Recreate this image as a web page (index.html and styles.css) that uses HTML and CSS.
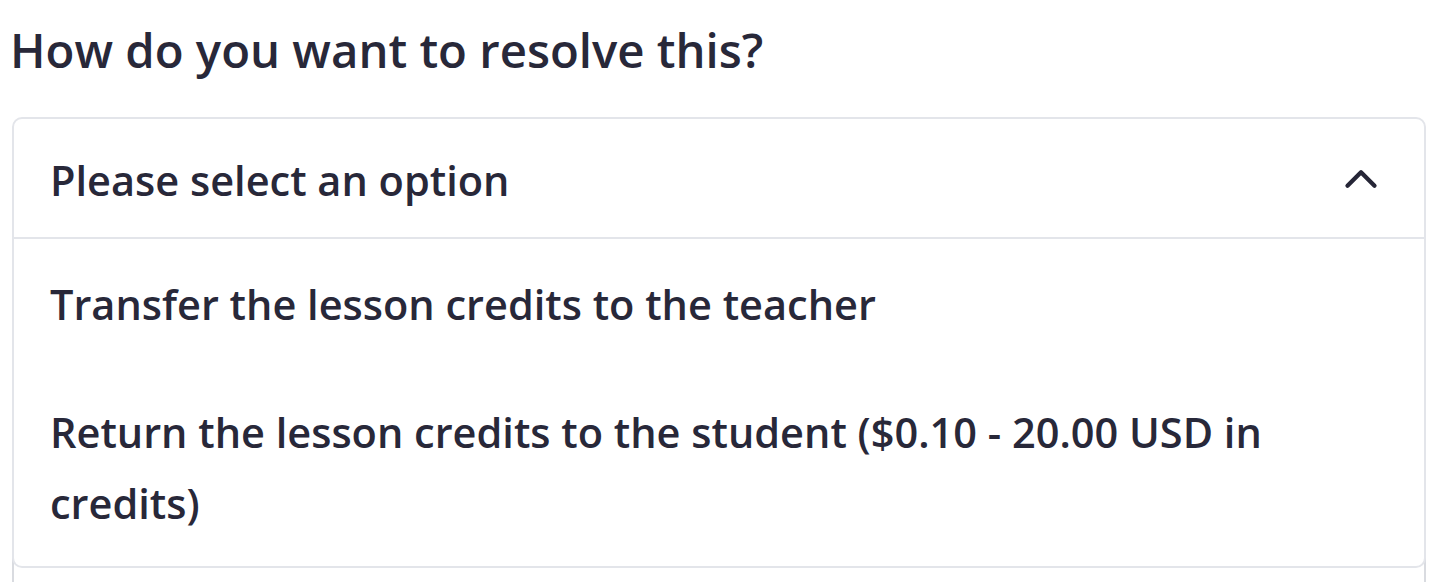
FILE: index.html
```html
<!DOCTYPE html>
<html lang="en">

<head>
    <meta charset="UTF-8">
    <meta name="viewport" content="width=device-width, initial-scale=1.0">
    <link rel="stylesheet" href="styles.css">
    <title>Resolve</title>
</head>

<body>

    <div class="wrapper">
        <h2 class="question">How do you want to resolve this?</h2>

        <div class="select open">
            <div class="selectHead">
                <span class="placeholder">Please select an option</span>
                <svg class="chevron" width="54" height="54" viewBox="0 0 24 24" fill="none">
                    <path d="M6 15l6-6 6 6" stroke="#262637" stroke-width="1.9" stroke-linecap="round" stroke-linejoin="round" />
                </svg>
            </div>
            <ul class="selectMenu">
                <li>Transfer the lesson credits to the teacher</li>
                <li>Return the lesson credits to the student ($0.10 - 20.00 USD in credits)</li>
            </ul>
        </div>

        <div class="notes"></div>
    </div>

</body>

</html>
```

FILE: styles.css
```css
* {
    margin: 0;
    padding: 0;
    list-style: none;
    box-sizing: border-box;
}

body {
    font-family: "Open Sans", "Noto Sans", sans-serif;
    color: #282839;
    background-color: #fff;
}

.wrapper {
    padding: 18px 12px 0 12px;
}

.question {
    font-size: 47.3px;
    font-weight: 600;
    line-height: 64px;
    margin-left: -2px;
    margin-bottom: 35px;
}

.select {
    position: relative;
    border: 2px solid #e3e5ea;
    border-radius: 10px 10px 0 0;
}

.select .selectHead {
    display: flex;
    align-items: center;
    justify-content: space-between;
    padding: 26px 36px 21px 36px;
    cursor: pointer;
}

.select .placeholder {
    font-size: 41.5px;
    font-weight: 600;
    line-height: 71px;
}

.select .chevron {
    display: block;
    margin-top: -4px;
}

.select .selectMenu {
    position: absolute;
    top: calc(100% + 2px);
    left: -2px;
    right: -2px;
    background-color: #fff;
    border: 2px solid #e3e5ea;
    border-top: none;
    border-radius: 0 0 10px 10px;
    z-index: 2;
}

.select .selectMenu li {
    font-size: 41.5px;
    font-weight: 600;
    line-height: 71.5px;
    padding: 30px 150px 26px 36px;
    cursor: pointer;
}

.notes {
    height: 400px;
    margin-top: 40px;
    border: 2px solid #d9dbe0;
    border-radius: 10px;
}
```
